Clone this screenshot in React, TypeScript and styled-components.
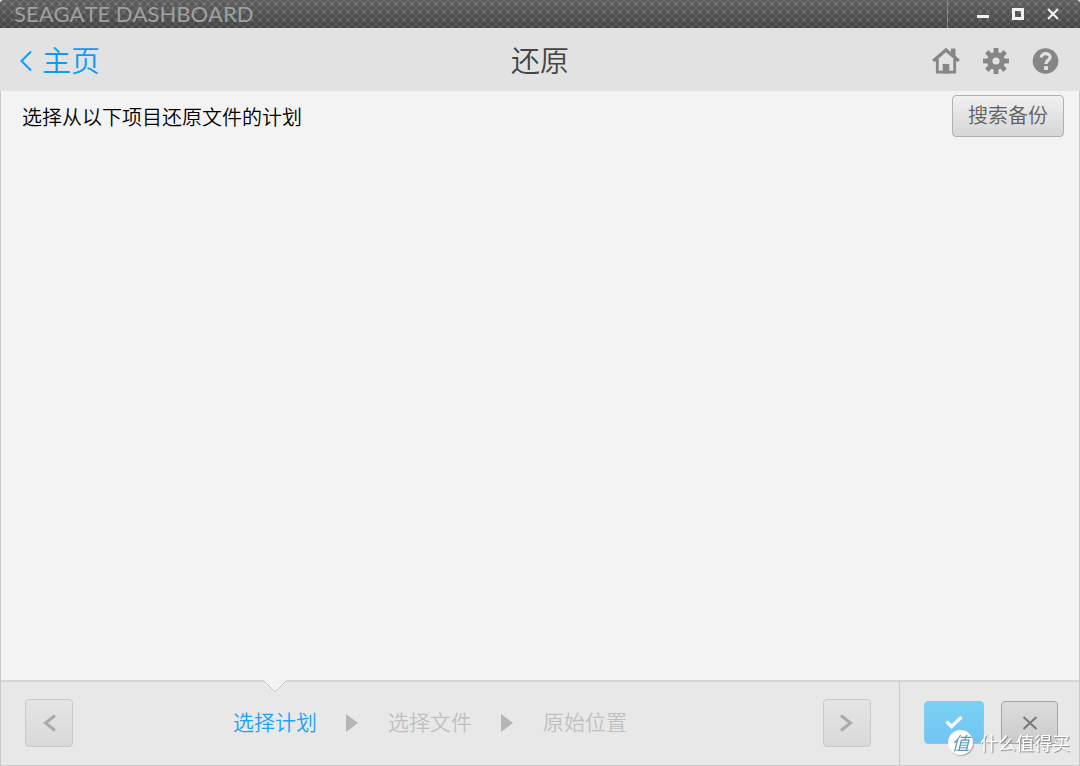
import React from "react";
import styled, { createGlobalStyle } from "styled-components";

const GlobalStyle = createGlobalStyle`
  * { box-sizing: border-box; }
  html { background: #e2e2e2; }
  body {
    margin: 0;
    font-family: "Noto Sans CJK SC", sans-serif;
    font-weight: 350;
    color: #111;
  }
  button { font: inherit; padding: 0; cursor: pointer; }
  svg { display: block; }
`;

const Window = styled.div`
  display: flex;
  flex-direction: column;
  min-height: 100vh;
`;

const TitleBar = styled.div`
  display: flex;
  justify-content: space-between;
  height: 28px;
  padding-left: 14px;
  border-radius: 4px 4px 0 0;
  background-color: #505050;
  background-image:
    linear-gradient(rgba(255, 255, 255, 0.08), rgba(0, 0, 0, 0.14)),
    radial-gradient(circle at 4px 4px, #727272 1px, transparent 2px),
    linear-gradient(45deg, transparent 42%, #646464 50%, transparent 58%),
    linear-gradient(-45deg, transparent 42%, #646464 50%, transparent 58%);
  background-size: 100% 100%, 8px 8px, 8px 8px, 8px 8px;
`;

const AppName = styled.span`
  color: #a0a0a0;
  font: 400 22px/28px Lato, sans-serif;
  font-kerning: none;
`;

const WindowControls = styled.div`
  display: flex;
  align-items: center;
  gap: 11px;
  padding: 0 15px 0 23px;
  border-left: 1px solid #858585;
`;

const ControlButton = styled.button`
  width: 24px;
  height: 24px;
  display: grid;
  place-items: center;
  border: 0;
  background: none;
  color: #f2f2f2;
`;

const Header = styled.header`
  display: grid;
  grid-template-columns: 1fr auto 1fr;
  align-items: center;
  height: 63px;
  padding: 2px 20px 0;
  background: #e2e2e2;
`;

const BackLink = styled.a`
  display: flex;
  align-items: center;
  gap: 8px;
  justify-self: start;
  color: #0c9cf8;
  font-size: 29px;
  line-height: 40px;
  text-decoration: none;
`;

const BackLabel = styled.span`
  padding-bottom: 4px;
`;

const PageTitle = styled.h1`
  margin: 0;
  padding-bottom: 4px;
  color: #444;
  font-size: 29px;
  font-weight: 350;
  line-height: 40px;
`;

const HeaderTools = styled.nav`
  display: flex;
  justify-self: end;
  gap: 22px;
`;

const ToolButton = styled.button`
  width: 28px;
  height: 28px;
  border: 0;
  background: none;
  color: #868686;
`;

const Content = styled.main`
  flex: 1;
  display: flex;
  justify-content: space-between;
  align-items: flex-start;
  padding: 4px 15px 4px 21px;
  border: solid #c9c9c9;
  border-width: 0 1px;
  background: #f3f3f3;
`;

const Prompt = styled.p`
  margin: 7px 0 0;
  color: #000;
  font-size: 20px;
  line-height: 30px;
`;

const SearchButton = styled.button`
  height: 42px;
  padding: 0 15px 2px;
  border: 1px solid #b0b0b0;
  border-radius: 4px;
  background: linear-gradient(#f0f0f0, #d6d6d6);
  color: #606060;
  font-size: 20px;
  line-height: 38px;
`;

const Footer = styled.footer`
  display: flex;
  height: 86px;
  border: 1px solid #c9c9c9;
  border-top: 2px solid #d4d4d4;
  background: #e8e8e8;
`;

const Wizard = styled.div`
  flex: 1;
  display: flex;
  justify-content: space-between;
  align-items: center;
  padding: 0 28px 2px 24px;
`;

const Steps = styled.ol`
  display: flex;
  align-items: center;
  gap: 29px;
  height: 100%;
  margin: 0 36px 0 0;
  padding: 0;
  list-style: none;
`;

const Step = styled.li<{ $active?: boolean }>`
  position: relative;
  display: flex;
  align-items: center;
  gap: 30px;
  height: 100%;
  color: ${(p) => (p.$active ? "#22a2f5" : "#c0c0c0")};
  font-size: 21px;
  line-height: 30px;
`;

const StepName = styled.span`
  padding-bottom: 4px;
`;

const StepPointer = styled.svg`
  position: absolute;
  top: -2px;
  left: 30px;
`;

const Arrow = styled.svg`
  color: #b5b5b5;
`;

const NavButton = styled.button`
  display: grid;
  place-items: center;
  width: 48px;
  height: 48px;
  border: 1px solid #c9c9c9;
  border-radius: 4px;
  background: linear-gradient(#e5e5e5, #d9d9d9);
  color: #aaa;
`;

const Actions = styled.div`
  display: flex;
  align-items: center;
  gap: 17px;
  padding: 0 21px 2px 24px;
  border-left: 1px solid #c9c9c9;
`;

const ActionButton = styled.button<{ $primary?: boolean }>`
  display: grid;
  place-items: center;
  width: ${(p) => (p.$primary ? 60 : 57)}px;
  height: 43px;
  border: 1px solid ${(p) => (p.$primary ? "#80ccef" : "#a5a5a5")};
  border-radius: 4px;
  background: ${(p) =>
    p.$primary ? "linear-gradient(#78d2f3, #73c3f4)" : "linear-gradient(#dcdcdc, #cbcbcb)"};
  color: ${(p) => (p.$primary ? "#f6f6f6" : "#777")};
`;

const Watermark = styled.div`
  position: fixed;
  right: 10px;
  bottom: 10px;
  display: flex;
  align-items: center;
  gap: 7px;
  color: #fff;
  font-size: 18px;
  font-weight: 400;
  line-height: 28px;
  text-shadow: 1px 1px 1px #888;
  pointer-events: none;
`;

const Seal = styled.span`
  width: 25px;
  height: 25px;
  border-radius: 50%;
  background: #fff;
  box-shadow: 1px 1px 1px #aaa;
  color: #5b9ab8;
  font-size: 18px;
  font-style: italic;
  line-height: 24px;
  text-align: center;
  text-shadow: none;
`;

const stepNames = ["选择计划", "选择文件", "原始位置"];

const gearTeeth = [0, 45, 90, 135, 180, 225, 270, 315];

export default function App() {
  return (
    <>
      <GlobalStyle />
      <Window>
        <TitleBar>
          <AppName>SEAGATE DASHBOARD</AppName>
          <WindowControls>
            <ControlButton aria-label="最小化">
              <svg width="14" height="14"><path d="M1 9.5h12" stroke="currentColor" strokeWidth="3" /></svg>
            </ControlButton>
            <ControlButton aria-label="最大化">
              <svg width="14" height="14"><path d="M2.500 2.500h9v9h-9z" fill="none" stroke="currentColor" strokeWidth="3" /></svg>
            </ControlButton>
            <ControlButton aria-label="关闭">
              <svg width="14" height="14"><path d="M2 2l10 10M12 2L2 12" stroke="currentColor" strokeWidth="2.200" /></svg>
            </ControlButton>
          </WindowControls>
        </TitleBar>

        <Header>
          <BackLink href="#home">
            <svg width="14" height="22"><path d="M11 1.500L1.500 11l9.500 9.500" fill="none" stroke="currentColor" strokeWidth="2" /></svg>
            <BackLabel>主页</BackLabel>
          </BackLink>
          <PageTitle>还原</PageTitle>
          <HeaderTools>
            <ToolButton aria-label="主页">
              <svg width="28" height="28" viewBox="0 0 28 28" fill="none" stroke="currentColor">
                <path d="M1.200 14L14 3l12.800 11" strokeWidth="3.400" />
                <path d="M5.300 12v13.200h17.400V12" strokeWidth="2.800" />
                <path d="M19 1.500h4.500v8.500l-4.500-4z" fill="currentColor" stroke="none" />
                <path d="M10.700 17h6.600v9.500h-6.600z" fill="currentColor" stroke="none" />
              </svg>
            </ToolButton>
            <ToolButton aria-label="设置">
              <svg width="28" height="28" viewBox="0 0 28 28">
                <circle cx="14" cy="14" r="6.300" fill="none" stroke="currentColor" strokeWidth="5.400" />
                {gearTeeth.map((a) => (
                  <path key={a} d="M11.600 6V1h4.800v5z" fill="currentColor" transform={`rotate(${a} 14 14)`} />
                ))}
              </svg>
            </ToolButton>
            <ToolButton aria-label="帮助">
              <svg width="28" height="28" viewBox="0 0 28 28">
                <circle cx="13.500" cy="14" r="12.800" fill="currentColor" />
                <path d="M9.300 10.500c0-5 8.800-5 8.800-.300 0 3.200-4.200 3-4.200 6.800" fill="none" stroke="#e2e2e2" strokeWidth="3.200" />
                <path d="M12 19.200h4v3.800h-4z" fill="#e2e2e2" />
              </svg>
            </ToolButton>
          </HeaderTools>
        </Header>

        <Content>
          <Prompt>选择从以下项目还原文件的计划</Prompt>
          <SearchButton>搜索备份</SearchButton>
        </Content>

        <Footer>
          <Wizard>
            <NavButton aria-label="上一步">
              <svg width="18" height="20"><path d="M15 2.500L5.500 10l9.500 7.500" fill="none" stroke="currentColor" strokeWidth="3" /></svg>
            </NavButton>
            <Steps>
              {stepNames.map((name, i) => (
                <Step key={name} $active={i === 0} aria-current={i === 0 ? "step" : undefined}>
                  {i === 0 && (
                    <StepPointer width="24" height="14">
                      <path d="M0 0h24v2h-1L12 13 1 2H0z" fill="#f3f3f3" />
                      <path d="M0 1h1l11 11L23 1h1" fill="none" stroke="#c4c4c4" />
                    </StepPointer>
                  )}
                  {i > 0 && (
                    <Arrow width="12" height="18"><path d="M0 0l12 9-12 9z" fill="currentColor" /></Arrow>
                  )}
                  <StepName>{name}</StepName>
                </Step>
              ))}
            </Steps>
            <NavButton aria-label="下一步">
              <svg width="18" height="20"><path d="M3 2.500L12.500 10 3 17.500" fill="none" stroke="currentColor" strokeWidth="3" /></svg>
            </NavButton>
          </Wizard>
          <Actions>
            <ActionButton $primary aria-label="确定">
              <svg width="20" height="18"><path d="M2.500 7.500l5 5L17.500 3" fill="none" stroke="currentColor" strokeWidth="3.500" /></svg>
            </ActionButton>
            <ActionButton aria-label="取消">
              <svg width="16" height="14"><path d="M1.500 1l13 12M14.500 1l-13 12" stroke="currentColor" strokeWidth="2" /></svg>
            </ActionButton>
          </Actions>
        </Footer>
      </Window>
      <Watermark>
        <Seal>值</Seal>
        什么值得买
      </Watermark>
    </>
  );
}
